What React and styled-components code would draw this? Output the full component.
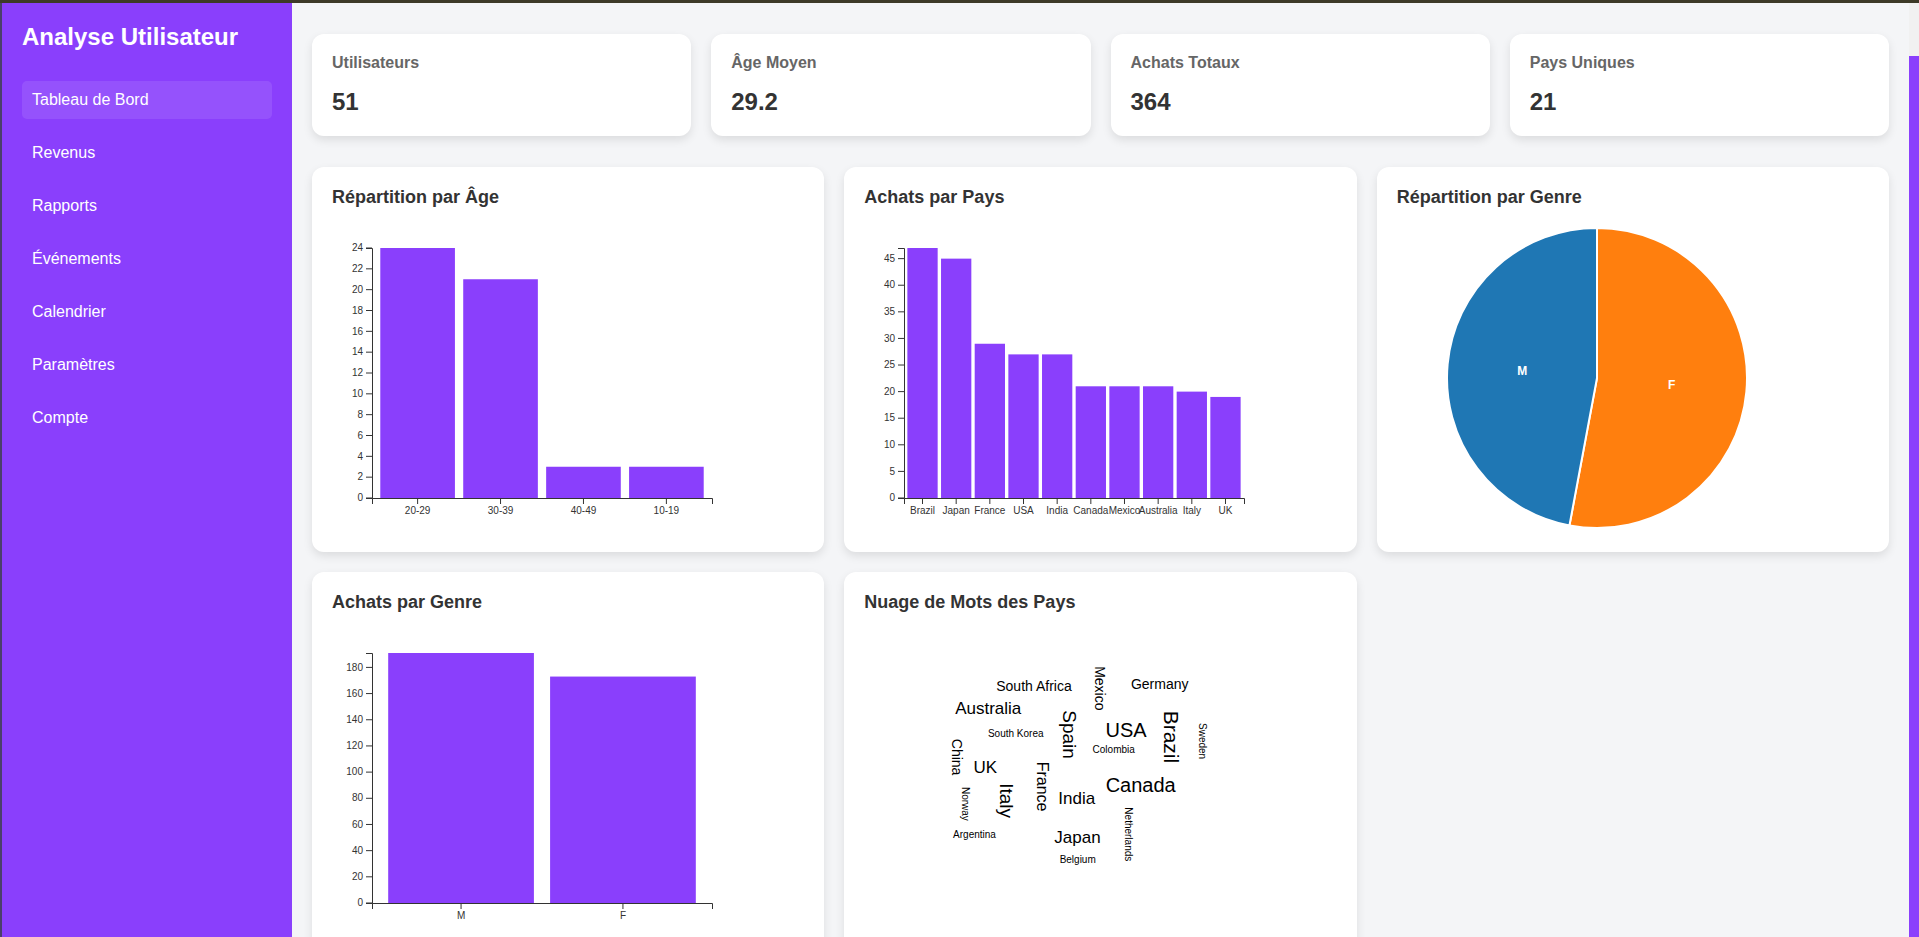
import styled, { createGlobalStyle } from "styled-components";

const PURPLE = "#8a3ffc";

const navItems = ["Tableau de Bord", "Revenus", "Rapports", "Événements", "Calendrier", "Paramètres", "Compte"];

const stats = [
    { label: "Utilisateurs", value: "51" },
    { label: "Âge Moyen", value: "29.2" },
    { label: "Achats Totaux", value: "364" },
    { label: "Pays Uniques", value: "21" },
];

const ageData = [["20-29", 24], ["30-39", 21], ["40-49", 3], ["10-19", 3]];
const countryData = [
    ["Brazil", 47], ["Japan", 45], ["France", 29], ["USA", 27], ["India", 27],
    ["Canada", 21], ["Mexico", 21], ["Australia", 21], ["Italy", 20], ["UK", 19],
];
const genderData = [["M", 191], ["F", 173]];

// [word, size, x, y, rotation] inside the cloud svg
const words = [
    ["South Africa", 14, 170, 57.6, 0],
    ["Germany", 14, 295.7, 56.3, 0],
    ["Australia", 17, 124.2, 80.6, 0],
    ["South Korea", 10, 151.7, 103.6, 0],
    ["USA", 20, 262, 103.6, 0],
    ["Colombia", 10, 249.7, 119.6, 0],
    ["UK", 17, 121.4, 139.6, 0],
    ["Canada", 20, 276.7, 159.3, 0],
    ["India", 17, 212.7, 170.6, 0],
    ["Argentina", 10, 110.5, 204.6, 0],
    ["Japan", 17, 213.5, 210.3, 0],
    ["Belgium", 10, 213.7, 229.6, 0],
    ["Mexico", 14, 230.7, 55.3, 90],
    ["Spain", 19, 199.4, 101.6, 90],
    ["Brazil", 21, 300, 103.9, 90],
    ["Sweden", 10, 335.4, 108.1, 90],
    ["China", 14, 88, 124.1, 90],
    ["France", 16, 173, 153.6, 90],
    ["Italy", 19, 136.4, 167.6, 90],
    ["Norway", 10, 97.7, 170.9, 90],
    ["Netherlands", 10, 260.7, 201.3, 90],
];

function BarChart({ data, step }) {
    const width = 340;
    const height = 250;
    const max = Math.max(...data.map((d) => d[1]));
    const bandStep = width / (data.length - 0.1 + 0.2);
    const band = bandStep * 0.9;
    const y = (v) => height - (v / max) * height;
    const ticks = [];
    for (let v = 0; v <= max; v += step) ticks.push(v);

    return (
        <ChartSvg width="400" height="300">
            <g transform="translate(40,20)">
                {data.map(([name, value], i) => (
                    <rect
                        key={name}
                        x={bandStep * 0.1 + i * bandStep}
                        y={y(value)}
                        width={band}
                        height={height - y(value)}
                        fill={PURPLE}
                    />
                ))}
                <g>
                    <path d={`M0.5,${height + 6}V${height + 0.5}H${width + 0.5}V${height + 6}`} fill="none" stroke="#333" />
                    {data.map(([name], i) => {
                        const cx = bandStep * 0.1 + i * bandStep + band / 2;
                        return (
                            <g key={name} transform={`translate(${cx},${height})`}>
                                <line y2="6" stroke="#333" />
                                <AxisText y="9" dy="0.71em" textAnchor="middle">{name}</AxisText>
                            </g>
                        );
                    })}
                </g>
                <g>
                    <path d={`M-6,${height + 0.5}H0.5V0.5H-6`} fill="none" stroke="#333" />
                    {ticks.map((v) => (
                        <g key={v} transform={`translate(0,${y(v)})`}>
                            <line x2="-6" stroke="#333" />
                            <AxisText x="-9" dy="0.32em" textAnchor="end">{v}</AxisText>
                        </g>
                    ))}
                </g>
            </g>
        </ChartSvg>
    );
}

function PieChart() {
    const radius = 150;
    const split = (27 / 51) * Math.PI * 2;
    const ex = radius * Math.sin(split);
    const ey = -radius * Math.cos(split);
    const label = (angle) => [75 * Math.sin(angle), -75 * Math.cos(angle)];
    const [fx, fy] = label(split / 2);
    const [mx, my] = label((split + Math.PI * 2) / 2);

    return (
        <ChartSvg width="400" height="300">
            <g transform="translate(200,150)">
                <path d={`M0,-${radius}A${radius},${radius} 0 1 1 ${ex},${ey}L0,0Z`} fill="#ff7f0e" stroke="#fff" strokeWidth="2" />
                <path d={`M${ex},${ey}A${radius},${radius} 0 0 1 0,-${radius}L0,0Z`} fill="#1f77b4" stroke="#fff" strokeWidth="2" />
                <PieLabel x={mx} y={my} dy="0.35em" textAnchor="middle">M</PieLabel>
                <PieLabel x={fx} y={fy} dy="0.35em" textAnchor="middle">F</PieLabel>
            </g>
        </ChartSvg>
    );
}

function WordCloud() {
    return (
        <ChartSvg width="400" height="300">
            {words.map(([word, size, x, y, rotate]) => (
                <CloudWord key={word} $size={size} textAnchor="middle" transform={`translate(${x},${y}) rotate(${rotate})`}>
                    {word}
                </CloudWord>
            ))}
        </ChartSvg>
    );
}

export default function App() {
    return (
        <>
            <GlobalStyle />
            <Page>
                <Sidebar>
                    <Brand>Analyse Utilisateur</Brand>
                    <Nav>
                        {navItems.map((item, i) => (
                            <NavItem key={item} $active={i === 0}>{item}</NavItem>
                        ))}
                    </Nav>
                </Sidebar>
                <Main>
                    <StatsRow>
                        {stats.map((s) => (
                            <StatCard key={s.label}>
                                <StatLabel>{s.label}</StatLabel>
                                <StatValue>{s.value}</StatValue>
                            </StatCard>
                        ))}
                    </StatsRow>
                    <ChartsGrid>
                        <ChartCard>
                            <ChartTitle>Répartition par Âge</ChartTitle>
                            <BarChart data={ageData} step={2} />
                        </ChartCard>
                        <ChartCard>
                            <ChartTitle>Achats par Pays</ChartTitle>
                            <BarChart data={countryData} step={5} />
                        </ChartCard>
                        <ChartCard>
                            <ChartTitle>Répartition par Genre</ChartTitle>
                            <PieChart />
                        </ChartCard>
                        <ChartCard>
                            <ChartTitle>Achats par Genre</ChartTitle>
                            <BarChart data={genderData} step={20} />
                        </ChartCard>
                        <ChartCard>
                            <ChartTitle>Nuage de Mots des Pays</ChartTitle>
                            <WordCloud />
                        </ChartCard>
                    </ChartsGrid>
                </Main>
                <ScrollTrack>
                    <ScrollThumb />
                </ScrollTrack>
            </Page>
        </>
    );
}

const GlobalStyle = createGlobalStyle`
    * {
        box-sizing: border-box;
    }

    html, body {
        margin: 0;
        height: 100%;
        overflow: hidden;
        font-family: "Liberation Sans", Arial, sans-serif;
        background-color: #f4f5f7;
    }
`

const Page = styled.div`
    display: flex;
    height: 937px;
    border-top: 3px solid #3d3a28;
`

const Sidebar = styled.aside`
    width: 292px;
    flex-shrink: 0;
    background-color: ${PURPLE};
    border-left: 2px solid #4a3f6b;
    padding: 20px;
    color: white;
`

const Brand = styled.h1`
    margin: 0 0 30px;
    font-size: 24px;
    font-weight: bold;
`

const Nav = styled.nav`
    display: flex;
    flex-direction: column;
    gap: 15px;
`

const NavItem = styled.div`
    height: 38px;
    padding: 0 10px;
    display: flex;
    align-items: center;
    font-size: 16px;
    border-radius: 5px;
    background-color: ${({ $active }) => ($active ? "rgba(255, 255, 255, 0.1)" : "transparent")};
`

const Main = styled.main`
    flex: 1;
    min-width: 0;
    padding: 31px 20px 0;
    overflow: hidden;
`

const StatsRow = styled.div`
    display: grid;
    grid-template-columns: repeat(4, 1fr);
    gap: 20px;
    margin-bottom: 31px;
`

const StatCard = styled.div`
    background-color: white;
    border-radius: 12px;
    padding: 20px;
    box-shadow: 0 4px 10px rgba(0, 0, 0, 0.1);
`

const StatLabel = styled.h3`
    margin: 0 0 16px;
    font-size: 16px;
    font-weight: bold;
    color: #666;
`

const StatValue = styled.div`
    font-size: 24px;
    line-height: 28px;
    font-weight: bold;
    color: #333;
`

const ChartsGrid = styled.div`
    display: grid;
    grid-template-columns: repeat(3, 1fr);
    gap: 20px;
`

const ChartCard = styled.div`
    background-color: white;
    border-radius: 12px;
    padding: 20px;
    box-shadow: 0 4px 10px rgba(0, 0, 0, 0.1);
`

const ChartTitle = styled.h3`
    margin: 0 0 20px;
    font-size: 18px;
    font-weight: bold;
    color: #333;
`

const ChartSvg = styled.svg`
    max-width: 100%;
`

const AxisText = styled.text`
    font-family: "Liberation Sans", Arial, sans-serif;
    font-size: 10px;
    fill: #333;
`

const PieLabel = styled.text`
    font-family: "Liberation Sans", Arial, sans-serif;
    font-size: 12px;
    font-weight: bold;
    fill: white;
`

const CloudWord = styled.text`
    font-family: "Liberation Sans", Arial, sans-serif;
    font-size: ${({ $size }) => $size}px;
    fill: black;
`

const ScrollTrack = styled.div`
    width: 10px;
    flex-shrink: 0;
    padding-top: 53px;
    background-color: #f1f1f1;
`

const ScrollThumb = styled.div`
    height: 100%;
    background-color: ${PURPLE};
`
